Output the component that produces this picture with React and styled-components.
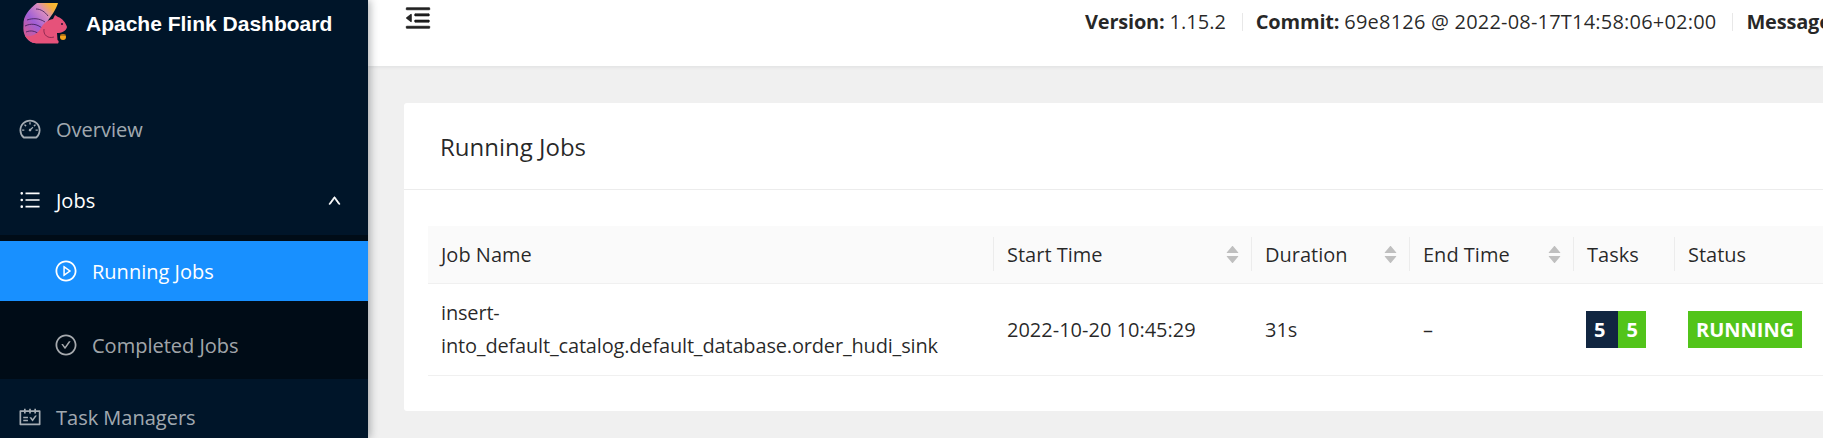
import React from 'react';
import styled, { createGlobalStyle } from 'styled-components';
import {
  AiOutlineDashboard,
  AiOutlineUnorderedList,
  AiOutlinePlayCircle,
  AiOutlineCheckCircle,
  AiOutlineSchedule,
  AiOutlineUp,
  AiOutlineMenuFold,
  AiFillCaretUp,
  AiFillCaretDown
} from 'react-icons/ai';

const GlobalStyle = createGlobalStyle`
  html, body {
    margin: 0;
    height: 100%;
    overflow: hidden;
    background: #f0f0f0;
  }
  body {
    font-family: "Open Sans", "Noto Sans", sans-serif;
    font-size: 20px;
    color: rgba(0, 0, 0, 0.85);
  }
`;

const Layout = styled.div`
  display: flex;
  width: 1823px;
  height: 438px;
  overflow: hidden;
`;

const Sider = styled.aside`
  flex: 0 0 368px;
  background: #001529;
  box-shadow: 2px 0 8px rgba(29, 35, 41, 0.35);
  position: relative;
  z-index: 2;
`;

const Brand = styled.div`
  display: flex;
  align-items: center;
  gap: 16px;
  height: 47px;
  padding-left: 20px;
`;

const BrandTitle = styled.span`
  font-family: "Liberation Sans", Arial, sans-serif;
  font-weight: 700;
  font-size: 21px;
  color: #fff;
`;

const Menu = styled.nav`
  margin-top: 52px;
`;

const MenuItem = styled.div`
  display: flex;
  align-items: center;
  height: 60px;
  margin-bottom: ${({ $gap }) => $gap || 0}px;
  padding-left: ${({ $sub }) => ($sub ? 54 : 18)}px;
  padding-right: 26px;
  gap: 14px;
  color: ${({ $active, $open }) => ($active || $open ? '#fff' : 'rgba(255, 255, 255, 0.65)')};
  background: ${({ $active }) => ($active ? '#1890ff' : 'transparent')};

  svg.lead {
    font-size: 24px;
    flex-shrink: 0;
  }
`;

const Arrow = styled(AiOutlineUp)`
  margin-left: auto;
  font-size: 15px;
  stroke-width: 50;
`;

const SubMenu = styled.div`
  background: #000c17;
  padding: 6px 0 4px;
  margin-top: 5px;
  margin-bottom: 8px;
`;

const Main = styled.main`
  flex: 1;
  min-width: 0;
  overflow: hidden;
`;

const Header = styled.header`
  display: flex;
  height: 66px;
  background: #fff;
  box-shadow: 0 1px 4px rgba(0, 21, 41, 0.08);
  padding-left: 35px;
  white-space: nowrap;
`;

const Trigger = styled(AiOutlineMenuFold)`
  flex-shrink: 0;
  font-size: 30px;
  margin-top: 3px;
  color: rgba(0, 0, 0, 0.85);
  stroke: currentColor;
  stroke-width: 24;
`;

const HeaderInfo = styled.div`
  display: flex;
  flex-shrink: 0;
  align-items: center;
  height: 43px;
  margin-left: 652px;
`;

const InfoItem = styled.div`
  display: flex;
  align-items: center;
  height: 18px;

  &:not(:first-child) {
    border-left: 1px solid #e8e8e8;
    margin-left: 16px;
    padding-left: 13px;
  }
`;

const InfoLabel = styled.strong`
  font-weight: 700;
  letter-spacing: -0.2px;
  margin-right: 5px;
`;

const InfoValue = styled.span`
  letter-spacing: ${({ $spacing }) => $spacing || 0}px;
`;

const Content = styled.div`
  padding: 37px 0 0 36px;
`;

const Card = styled.section`
  width: 1500px;
  height: 308px;
  background: #fff;
  border-radius: 3px;
`;

const CardTitle = styled.div`
  display: flex;
  align-items: center;
  height: 86px;
  padding-left: 36px;
  border-bottom: 1px solid #ececec;
  font-size: 24px;
  font-weight: 500;
`;

const CardBody = styled.div`
  padding: 36px 24px 0;
`;

const Table = styled.table`
  width: 1452px;
  table-layout: fixed;
  border-collapse: collapse;
  border-spacing: 0;
`;

const HeadCell = styled.th`
  position: relative;
  height: 57px;
  padding: 0 13px;
  text-align: left;
  font-weight: 500;
  background: #fafafa;
  border-bottom: 1px solid #f0f0f0;
  box-sizing: border-box;

  &:not(:last-child)::after {
    content: '';
    position: absolute;
    top: 11px;
    right: 0;
    width: 1px;
    height: 34px;
    background: #ececec;
  }
`;

const HeadInner = styled.div`
  display: flex;
  align-items: center;
  justify-content: space-between;
`;

const Sorter = styled.span`
  display: flex;
  flex-direction: column;
  color: #bfbfbf;
  font-size: 17px;
  margin-right: -2px;

  svg + svg {
    margin-top: -7px;
  }
`;

const BodyCell = styled.td`
  height: 92px;
  padding: 0 13px;
  line-height: 33px;
  border-bottom: 1px solid #f0f0f0;
  box-sizing: border-box;
  letter-spacing: ${({ $spacing }) => $spacing || 0}px;
`;

const Badges = styled.div`
  display: flex;
  margin-left: -1px;
`;

const Badge = styled.span`
  height: 37px;
  line-height: 37px;
  padding: 0 ${({ $right }) => $right}px 0 ${({ $left }) => $left}px;
  background: ${({ $bg }) => $bg};
  color: #fff;
  font-weight: 700;
`;

const StatusBadges = styled(Badges)`
  margin-left: 0;
`;

const Logo = () => (
  <svg width="50" height="42" viewBox="20 0 50 42" aria-hidden="true">
    <defs>
      <linearGradient id="tail" x1="0" y1="1" x2="1" y2="0">
        <stop offset="0" stopColor="#e5577a" />
        <stop offset="0.42" stopColor="#a05fd6" />
        <stop offset="0.68" stopColor="#d98cc0" />
        <stop offset="0.86" stopColor="#f7b23a" />
        <stop offset="1" stopColor="#fbc02d" />
      </linearGradient>
    </defs>
    <path d="M37 0 C29 6 23 13 23.5 22 C22.5 31 26 37 33 40 L44 38 C40 30 42 23 47 19 C51 13 56 7 58 0 Z" fill="url(#tail)" />
    <path d="M27 17 C33 15 39 15 45 19 M25 23 C31 20 37 21 42 25 M26 29 C31 27 35 28 39 31 M36 6 C41 6 45 9 48 13" stroke="#3a1a50" strokeWidth="0.8" fill="none" />
    <path d="M25 33 C29 38 33 40.5 38 40.5 L58 40.5 C59 39 59 38 57.5 37 L57 30 C62 30 66 28 67 24 C66 20 62 15 58 14 L55 12 L53 16 C47 17 43 21 41 25 C37 32 31 34 25 33 Z" fill="#e6527a" />
    <circle cx="62" cy="21" r="1" fill="#2a1030" />
    <path d="M44 26 C43 32 48 36 54 34" stroke="#7c2148" strokeWidth="0.8" fill="none" />
    <circle cx="63" cy="34" r="3" fill="#f5a21b" />
    <path d="M60 32 L66 32" stroke="#7a4b10" strokeWidth="1" />
  </svg>
);

const Sort = () => (
  <Sorter>
    <AiFillCaretUp />
    <AiFillCaretDown />
  </Sorter>
);

const columns = [
  { title: 'Job Name', width: 566 },
  { title: 'Start Time', width: 258, sortable: true },
  { title: 'Duration', width: 158, sortable: true },
  { title: 'End Time', width: 164, sortable: true },
  { title: 'Tasks', width: 101 },
  { title: 'Status', width: 205, sortable: true }
];

const App = () => (
  <>
    <GlobalStyle />
    <Layout>
      <Sider>
        <Brand>
          <Logo />
          <BrandTitle>Apache Flink Dashboard</BrandTitle>
        </Brand>
        <Menu>
          <MenuItem $gap={11}>
            <AiOutlineDashboard className="lead" />
            Overview
          </MenuItem>
          <MenuItem $open>
            <AiOutlineUnorderedList className="lead" />
            Jobs
            <Arrow />
          </MenuItem>
          <SubMenu>
            <MenuItem $sub $active $gap={14}>
              <AiOutlinePlayCircle className="lead" />
              Running Jobs
            </MenuItem>
            <MenuItem $sub>
              <AiOutlineCheckCircle className="lead" />
              Completed Jobs
            </MenuItem>
          </SubMenu>
          <MenuItem>
            <AiOutlineSchedule className="lead" />
            Task Managers
          </MenuItem>
        </Menu>
      </Sider>
      <Main>
        <Header>
          <Trigger />
          <HeaderInfo>
            <InfoItem><InfoLabel>Version:</InfoLabel><InfoValue>1.15.2</InfoValue></InfoItem>
            <InfoItem><InfoLabel>Commit:</InfoLabel><InfoValue $spacing={0.2}>69e8126 @ 2022-08-17T14:58:06+02:00</InfoValue></InfoItem>
            <InfoItem><InfoLabel>Message:</InfoLabel></InfoItem>
          </HeaderInfo>
        </Header>
        <Content>
          <Card>
            <CardTitle>Running Jobs</CardTitle>
            <CardBody>
              <Table>
                <colgroup>
                  {columns.map((c) => <col key={c.title} width={c.width} />)}
                </colgroup>
                <thead>
                  <tr>
                    {columns.map((c) => (
                      <HeadCell key={c.title}>
                        <HeadInner>
                          {c.title}
                          {c.sortable && <Sort />}
                        </HeadInner>
                      </HeadCell>
                    ))}
                  </tr>
                </thead>
                <tbody>
                  <tr>
                    <BodyCell $spacing={-0.17}>insert-into_default_catalog.default_database.order_hudi_sink</BodyCell>
                    <BodyCell>2022-10-20 10:45:29</BodyCell>
                    <BodyCell>31s</BodyCell>
                    <BodyCell>–</BodyCell>
                    <BodyCell>
                      <Badges>
                        <Badge $bg="#112641" $left={8} $right={13}>5</Badge>
                        <Badge $bg="#52c41a" $left={8} $right={8}>5</Badge>
                      </Badges>
                    </BodyCell>
                    <BodyCell>
                      <StatusBadges>
                        <Badge $bg="#52c41a" $left={8} $right={8}>RUNNING</Badge>
                      </StatusBadges>
                    </BodyCell>
                  </tr>
                </tbody>
              </Table>
            </CardBody>
          </Card>
        </Content>
      </Main>
    </Layout>
  </>
);

export default App;
